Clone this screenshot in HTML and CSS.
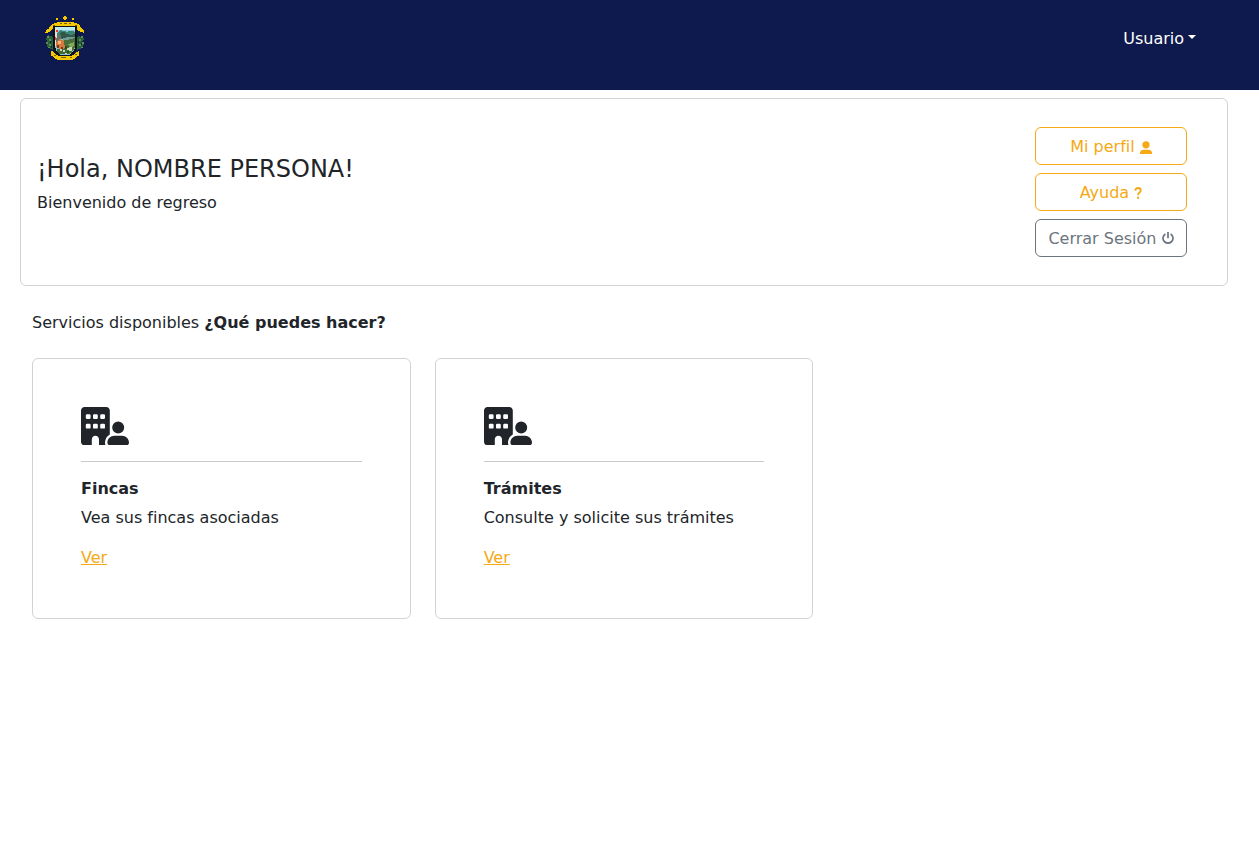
FILE: index.html
```html
<!DOCTYPE html>
<html lang="es">
<head>
<meta charset="utf-8">
<title>Inicio</title>
<link rel="stylesheet" href="styles.css">
</head>
<body>
<svg class="sprite" aria-hidden="true">
  <symbol id="building-user" viewBox="0 0 640 512">
    <path fill-rule="evenodd" d="M48 0C21.500 0 0 21.500 0 48V464c0 26.500 21.500 48 48 48h96V432c0-26.500 21.500-48 48-48s48 21.500 48 48v80h89.900c-6.300-10.200-9.900-22.200-9.900-35.100c0-46.900 25.800-87.800 64-109.200V48c0-26.500-21.500-48-48-48H48zM80 96h32q16 0 16 16v32q0 16-16 16H80q-16 0-16-16V112q0-16 16-16zM176 96h32q16 0 16 16v32q0 16-16 16H176q-16 0-16-16V112q0-16 16-16zM272 96h32q16 0 16 16v32q0 16-16 16H272q-16 0-16-16V112q0-16 16-16zM80 224h32q16 0 16 16v32q0 16-16 16H80q-16 0-16-16V240q0-16 16-16zM176 224h32q16 0 16 16v32q0 16-16 16H176q-16 0-16-16V240q0-16 16-16zM272 224h32q16 0 16 16v32q0 16-16 16H272q-16 0-16-16V240q0-16 16-16z"/>
    <path d="M576 272a80 80 0 1 0-160 0 80 80 0 1 0 160 0zM352 477.100c0 19.300 15.600 34.900 34.900 34.900H605.100c19.300 0 34.900-15.600 34.900-34.900c0-51.400-41.700-93.100-93.100-93.100H445.100c-51.400 0-93.100 41.700-93.100 93.100z"/>
  </symbol>
</svg>
<header class="navbar">
  <a class="brand" href="#" aria-label="Inicio">
    <svg class="crest" viewBox="0 0 180 180" shape-rendering="crispEdges">
      <g fill="#f5c800">
        <path d="M63 30h6v6h-6zM87 24h6v12h-6zM84 27h12v6H84zM111 30h6v6h-6z"/>
        <path d="M48 51l12-6 14-4h33l16 4 11 6v6l-12 2-14-6H75l-18 8-12 9-9 7-6-2 3-8 9-6z"/>
        <path d="M120 53l12-2 6 9 11 9-3 5-11-3-9-6-9-4z"/>
      </g>
      <path d="M75 45h6v3h-6zM87 45h9v3h-9zM102 45h6v3h-6zM54 51h6v3h-6zM120 51h6v3h-6z" fill="#765d08"/>
      <path d="M39 81l6 6 3-6 6 8v37l-6-3-9-3-5-12 5-5-6-10zM141 81l-6 6-3-6-6 8v37l6-3 9-3 6-12-6-5 6-10z" fill="#285f3c"/>
      <path d="M36 84h6v6h-6zM42 93h6v6h-6zM33 102h6v6h-6zM42 108h6v6h-6zM39 117h6v3h-6zM138 84h6v6h-6zM132 93h6v6h-6zM141 102h6v6h-6zM132 108h6v6h-6zM138 117h6v3h-6z" fill="#5c914f"/>
      <path d="M45 99h3v6h-3zM48 114h3v6h-3zM129 99h3v6h-3zM138 105h3v6h-3z" fill="#092d32"/>
      <path d="M54 54h72v63l-6 18-14 11H73l-13-11-6-18z" fill="#101418"/>
      <path d="M60 57h61v59l-6 15-11 9H75l-10-9-5-16z" fill="#87c5d3"/>
      <path d="M60 57h60v9H60z" fill="#bdebf1"/>
      <path d="M66 75l9-9 12 3 9 3 12-4 12 4v21H72z" fill="#398472"/>
      <path d="M75 75l12-5 9 8 12 3 12-3v15H81z" fill="#315747"/>
      <path d="M84 91l16-5h20v11l-18 5H84z" fill="#719c9a"/>
      <path d="M81 99l18-4 21-5v28l-9 15-12 6-18-9z" fill="#486e39"/>
      <path d="M99 108l18-6v12l-9 6z" fill="#80a95a"/>
      <path d="M60 63h6v54l-6-3z" fill="#eddfcc"/>
      <path d="M63 66h6v6h-6zM60 87h3v9h-3z" fill="#e64131"/>
      <path d="M66 81h12v9l-6 12h-9z" fill="#63746c"/>
      <path d="M63 102l12-9 12 6 3 21-7 4-11-2-8-4z" fill="#d7793e"/>
      <path d="M69 99h9v9h-9z" fill="#f0b478"/>
      <path d="M66 111h6v9h-6zM78 117h6v6h-6z" fill="#783925"/>
      <path d="M66 123h24l6 9-6 7H76l-9-8z" fill="#41683a"/>
      <path d="M75 123h6v6h-6zM84 126h6v6h-6zM96 120h6v6h-6zM102 117h9v12h-9zM90 135h6v4h-6z" fill="#c9d7ae"/>
      <path d="M90 114h6v9h-6zM96 129h6v6h-6z" fill="#244d22"/>
      <path d="M48 129l9 3 9 10 12 3h24l12-3 9-10 9-2v12l-12 9-9 5H69l-9-5-12-9z" fill="#f5c800"/>
      <path d="M57 141h6v3h-6zM78 147h15v3H78zM105 147h6v3h-6zM120 138h6v3h-6z" fill="#80610a"/>
    </svg>
  </a>
  <a class="user-menu" href="#">Usuario</a>
</header>
<main class="content">
  <section class="card welcome">
    <div class="greeting">
      <h1>¡Hola, NOMBRE PERSONA!</h1>
      <p>Bienvenido de regreso</p>
    </div>
    <div class="actions">
      <a class="btn" href="#">Mi perfil <svg class="icon icon-user" viewBox="0 0 12 13"><circle cx="6" cy="3.800" r="3.600"/><path d="M0 13v-.7Q0 8.700 3.700 8.700h4.600Q12 8.700 12 12.300v.7z"/></svg></a>
      <a class="btn" href="#">Ayuda <svg class="icon icon-help" viewBox="0 0 8 12"><path d="M1.300 3.700C1.300 1.900 2.500 1 4 1s2.700 1 2.700 2.400C6.700 5.500 4 5.600 4 8.300" fill="none" stroke="currentColor" stroke-width="1.800"/><path d="M3 9.700h2v2H3z"/></svg></a>
      <a class="btn btn-secondary" href="#">Cerrar Sesión <svg class="icon icon-power" viewBox="0 0 12 12"><path d="M3.400 1.900a5 5 0 1 0 5.200 0M6 0v6.200" fill="none" stroke="currentColor" stroke-width="1.700"/></svg></a>
    </div>
  </section>
  <p class="services-title">Servicios disponibles <strong>¿Qué puedes hacer?</strong></p>
  <section class="services">
    <article class="card service">
      <svg class="service-icon"><use href="#building-user"/></svg>
      <hr>
      <h2>Fincas</h2>
      <p>Vea sus fincas asociadas</p>
      <a class="link" href="#">Ver</a>
    </article>
    <article class="card service">
      <svg class="service-icon"><use href="#building-user"/></svg>
      <hr>
      <h2>Trámites</h2>
      <p>Consulte y solicite sus trámites</p>
      <a class="link" href="#">Ver</a>
    </article>
  </section>
</main>
</body>
</html>
```

FILE: styles.css
```css
* { box-sizing: border-box; }
body {
  margin: 0;
  background: #fff;
  color: #212529;
  font: 16px/1.5 "DejaVu Sans", sans-serif;
}
h1, h2, p { margin: 0; }
.sprite { display: none; }
.navbar {
  display: flex;
  justify-content: space-between;
  height: 90px;
  padding: 8px 63px 0 35px;
  background: #0e1a4d;
}
.brand { height: 60px; }
.crest { display: block; width: 60px; height: 60px; }
.user-menu {
  margin-top: 19px;
  height: 24px;
  color: #fff;
  text-decoration: none;
}
.user-menu::after {
  content: "";
  display: inline-block;
  margin-left: 4px;
  vertical-align: 5px;
  border-top: 4.8px solid;
  border-right: 4.8px solid transparent;
  border-left: 4.8px solid transparent;
}
.content { width: 1208px; margin: 8px 0 0 20px; }
.card { border: 1px solid rgba(0, 0, 0, .176); border-radius: 6px; }
.welcome {
  display: flex;
  align-items: center;
  justify-content: space-between;
  height: 188px;
  padding: 0 40px 0 16px;
}
.greeting { padding-top: 2px; }
.greeting h1 { margin-bottom: 8px; font-size: 24px; font-weight: 400; line-height: 1.2; }
.greeting p { margin-bottom: 16px; }
.actions { display: flex; flex-direction: column; gap: 8px; width: 152px; }
.btn {
  height: 38px;
  padding: 7px 12px 5px;
  border: 1px solid currentColor;
  border-radius: 6px;
  color: #f5a914;
  text-align: center;
  text-decoration: none;
  white-space: nowrap;
}
.btn-secondary { color: #6c757d; }
.icon { fill: currentColor; }
.icon-user { width: 12px; height: 13px; vertical-align: -2px; }
.icon-help { width: 8px; height: 12px; vertical-align: -1px; }
.icon-power { width: 12px; height: 12px; vertical-align: 0; }
.services-title { margin: 25px 12px 23px; }
.services { display: grid; grid-template-columns: repeat(3, 1fr); gap: 24px; padding: 0 12px; }
.service { padding: 48px; }
.service-icon { display: block; width: 48px; height: 38.4px; fill: currentColor; }
.service hr { margin: 16px 0 17px; border: 0; border-top: 1px solid #c8c9ca; }
.service h2 { margin-bottom: 7px; font-size: 16px; font-weight: 700; line-height: 1.2; }
.service p { margin-bottom: 16px; }
.link { display: block; width: max-content; color: #f5a914; }
```
